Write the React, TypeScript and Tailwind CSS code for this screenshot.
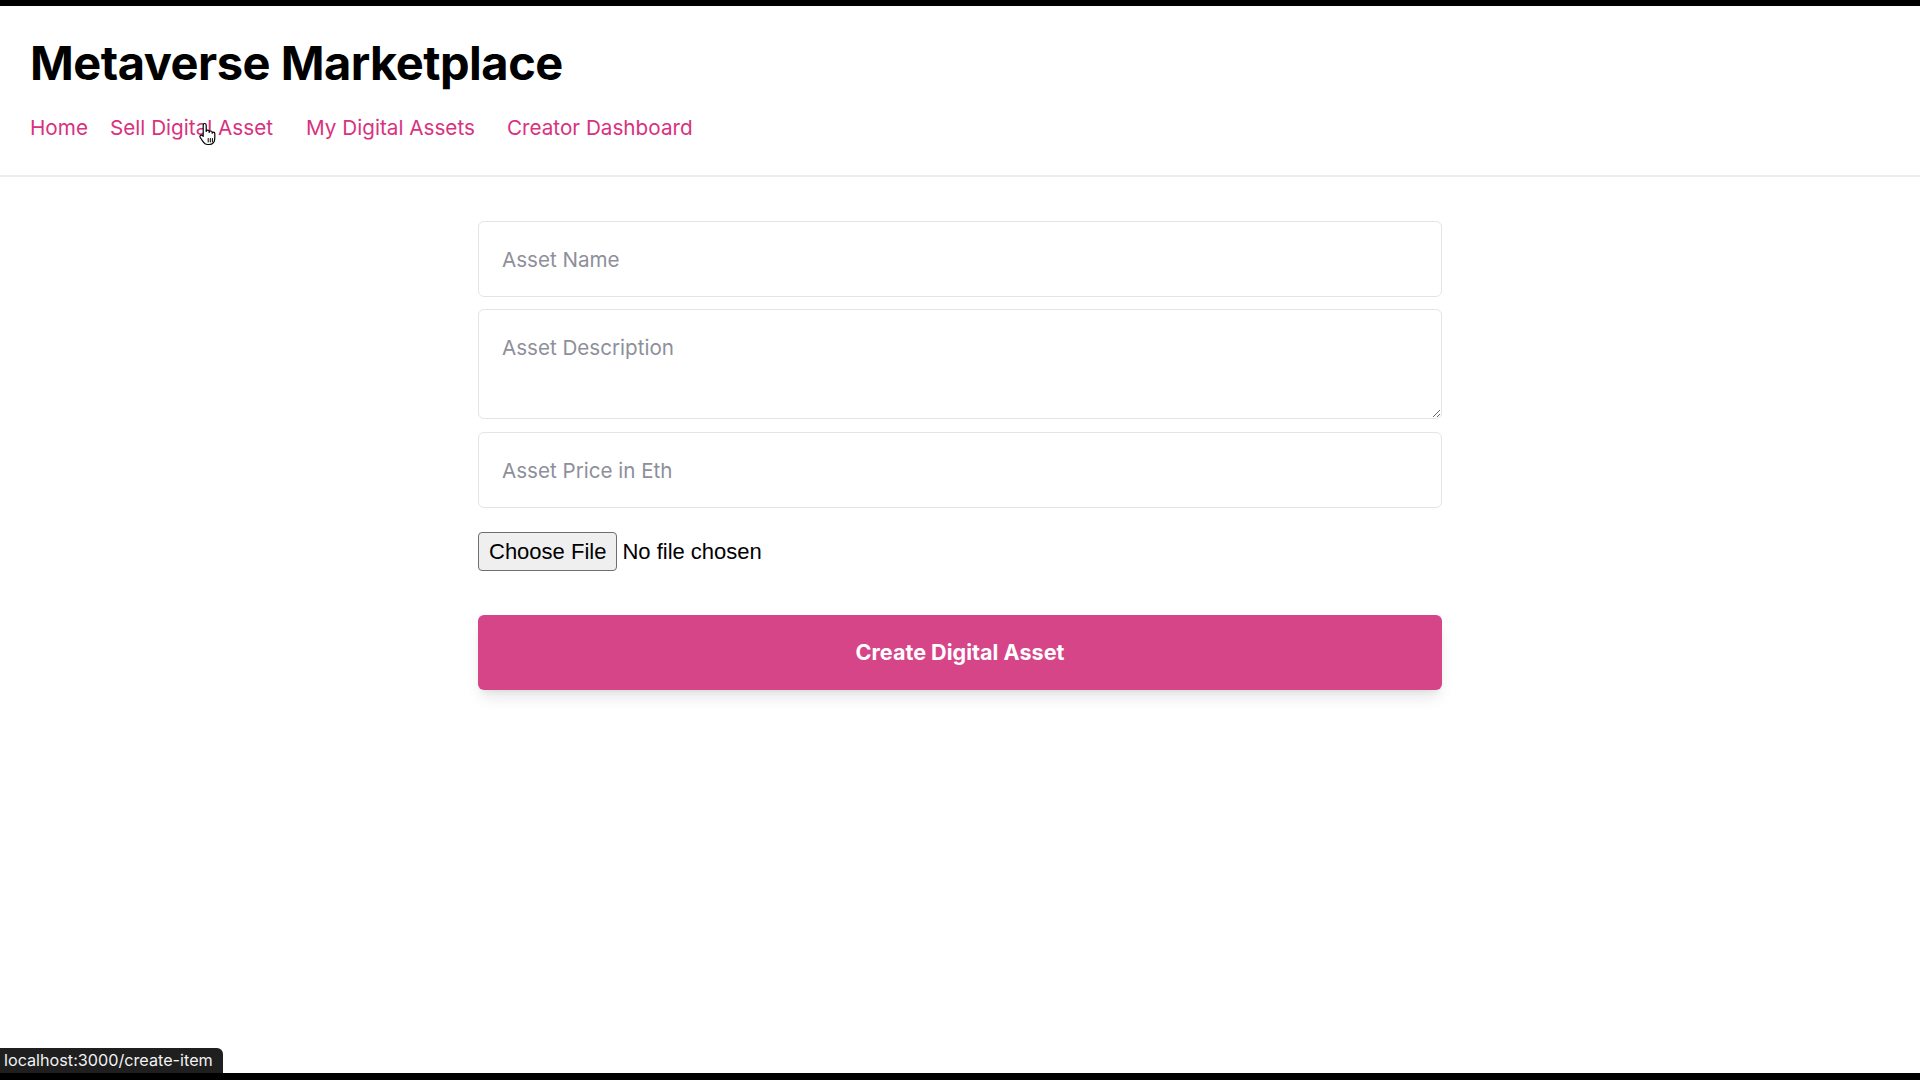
import { useState } from 'react';

// macOS style pointing hand cursor, drawn over the "Sell Digital Asset" link
const HandCursor = () => (
  <svg
    viewBox="0 0 18 24"
    className="pointer-events-none absolute left-[88px] top-[8px] h-[24px] w-[18px]"
  >
    <path
      d="M5.2 14.4V3.2C5.2 2.25 5.9 1.5 6.7 1.5S8.2 2.25 8.2 3.2V9.5C8.2 8.7 8.9 8.1 9.7 8.1S11.2 8.7 11.2 9.5V10.4C11.2 9.6 11.9 9 12.7 9S14.2 9.6 14.2 10.4V11.3C14.2 10.6 14.8 10.1 15.5 10.1S16.8 10.6 16.8 11.3V16C16.8 19.8 14.6 22.5 11 22.5H9.6C7.8 22.5 6.6 21.7 5.6 20.3L2.2 15.5C1.7 14.8 1.8 13.9 2.5 13.4C3.2 12.9 4.1 13.1 4.6 13.7Z"
      fill="#fff"
      stroke="#000"
      strokeWidth="1.2"
      strokeLinejoin="round"
    />
    <path d="M10.2 16.5v3.5M12.3 16.5v3.5M14.4 16.5v3.5" stroke="#000" strokeWidth="1" strokeLinecap="round" />
  </svg>
);

export default function App() {
  const [form, setForm] = useState({ name: '', description: '', price: '' });

  return (
    <div className="relative flex h-[1080px] flex-col overflow-hidden bg-white font-['Inter',sans-serif]">
      {/* screen recording frame */}
      <div className="h-[6px] shrink-0 bg-black" />

      <nav className="border-b-2 border-[#ececec] px-[30px] pt-[29px] pb-[33px]">
        <p className="text-[47px] leading-[56px] font-bold tracking-[-0.5px] text-black">Metaverse Marketplace</p>
        <div className="mt-[23px] flex text-[20.7px] leading-[28px] text-[#d8327e]">
          <a className="mr-[22px] cursor-pointer">Home</a>
          <a className="relative mr-[33px] cursor-pointer">
            Sell Digital Asset
            <HandCursor />
          </a>
          <a className="mr-[32px] cursor-pointer">My Digital Assets</a>
          <a className="cursor-pointer">Creator Dashboard</a>
        </div>
      </nav>

      <div className="flex justify-center">
        <div className="mt-[44px] flex w-[964px] flex-col">
          <input
            placeholder="Asset Name"
            value={form.name}
            onChange={(e) => setForm({ ...form, name: e.target.value })}
            className="h-[76px] rounded-[6px] border border-[#e4e4e4] px-[23px] text-[20.6px] text-black outline-none placeholder:text-[#8e8f9a]"
          />
          <textarea
            placeholder="Asset Description"
            value={form.description}
            onChange={(e) => setForm({ ...form, description: e.target.value })}
            className="mt-[12px] h-[110px] rounded-[6px] border border-[#e4e4e4] px-[23px] pt-[23px] text-[20.6px] leading-[30px] text-black outline-none placeholder:text-[#8e8f9a]"
          />
          <input
            placeholder="Asset Price in Eth"
            value={form.price}
            onChange={(e) => setForm({ ...form, price: e.target.value })}
            className="mt-[13px] h-[76px] rounded-[6px] border border-[#e4e4e4] px-[23px] text-[20.6px] text-black outline-none placeholder:text-[#8e8f9a]"
          />
          <input
            type="file"
            name="Asset"
            className="mt-[24px] h-[39px] font-['Liberation_Sans',Arial,sans-serif] text-[22px] leading-[25px] text-black file:mr-[5px] file:h-[39px] file:rounded-[4px] file:border file:border-solid file:border-[#6e6e6e] file:bg-[#efefef] file:px-[10px] file:py-[6px] file:leading-[25px] file:text-black"
          />
          <button className="mt-[44px] h-[75px] rounded-[6px] bg-[#d74589] text-[21.6px] font-bold text-white shadow-lg">
            Create Digital Asset
          </button>
        </div>
      </div>

      <div className="flex-1" />

      {/* browser status bar link preview */}
      <div className="absolute bottom-[7px] left-0 h-[25px] rounded-tr-[6px] bg-[#1f1f1f] pr-[10px] pl-[4px] text-[16.2px] leading-[25px] text-[#f2f2f2]">
        localhost:3000/create-item
      </div>
      <div className="h-[7px] shrink-0 bg-black" />
    </div>
  );
}
